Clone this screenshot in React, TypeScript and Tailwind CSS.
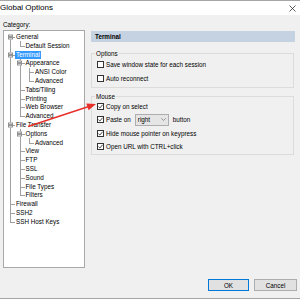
import React from "react";

// tree rows: label, guide columns (| continue, T tee, L corner, F first root, space none), expander box
const rows: { label: string; guides: string; box?: boolean; selected?: boolean }[] = [
  { label: "General", guides: "F", box: true },
  { label: "Default Session", guides: "|L" },
  { label: "Terminal", guides: "T", box: true, selected: true },
  { label: "Appearance", guides: "|T", box: true },
  { label: "ANSI Color", guides: "||T" },
  { label: "Advanced", guides: "||L" },
  { label: "Tabs/Tiling", guides: "|T" },
  { label: "Printing", guides: "|T" },
  { label: "Web Browser", guides: "|T" },
  { label: "Advanced", guides: "|L" },
  { label: "File Transfer", guides: "T", box: true },
  { label: "Options", guides: "|T", box: true },
  { label: "Advanced", guides: "||L" },
  { label: "View", guides: "|T" },
  { label: "FTP", guides: "|T" },
  { label: "SSL", guides: "|T" },
  { label: "Sound", guides: "|T" },
  { label: "File Types", guides: "|T" },
  { label: "Filters", guides: "|L" },
  { label: "Firewall", guides: "T" },
  { label: "SSH2", guides: "T" },
  { label: "SSH Host Keys", guides: "L" },
];

function Guide({ kind, box }: { kind: string; box?: boolean }) {
  const own = kind === "T" || kind === "L" || kind === "F";
  return (
    <span className="relative h-full w-[9.5px] shrink-0">
      {(kind === "|" || kind === "T") && <span className="absolute bottom-0 left-[4.5px] top-0 w-px bg-[#a0a0a0]" />}
      {kind === "L" && <span className="absolute left-[4.5px] top-0 h-1/2 w-px bg-[#a0a0a0]" />}
      {kind === "F" && <span className="absolute bottom-0 left-[4.5px] top-1/2 w-px bg-[#a0a0a0]" />}
      {own && <span className="absolute left-[4.5px] right-0 top-1/2 h-px bg-[#a0a0a0]" />}
      {box && (
        <span className="absolute left-[2px] top-1/2 flex h-[5px] w-[5px] -translate-y-1/2 items-center justify-center border border-[#919191] bg-white">
          <span className="h-px w-[3px] bg-[#333]" />
        </span>
      )}
    </span>
  );
}

function Check({ checked, label }: { checked?: boolean; label: React.ReactNode }) {
  return (
    <div className="flex items-center gap-[2px]">
      <span className="flex h-[7px] w-[7px] shrink-0 items-center justify-center border border-[#333] bg-white">
        {checked && (
          <svg width="5" height="5" viewBox="0 0 5 5">
            <path d="M0.4 2.6 L1.9 4 L4.6 0.7" stroke="#222" strokeWidth="0.8" fill="none" />
          </svg>
        )}
      </span>
      {label}
    </div>
  );
}

export default function App() {
  return (
    <div className="relative h-[300px] w-[300px] overflow-hidden bg-white font-['Liberation_Sans',Arial,sans-serif] text-black">
      {/* title bar */}
      <div className="flex h-[15px] items-center justify-between border-t border-[#a5a5a5] bg-white">
        <span className="text-[8px] leading-none">Global Options</span>
        <svg width="7" height="7" viewBox="0 0 7 7" className="mr-[4px]">
          <path d="M0.5 0.5 L6.5 6.5 M6.5 0.5 L0.5 6.5" stroke="#333" strokeWidth="0.8" />
        </svg>
      </div>

      <div className="flex h-[284px] flex-col border-b border-[#a5a5a5] bg-[#f0f0f0] px-[3px] text-[6.3px] leading-[7px]">
        <div className="pt-[6px]">Category:</div>

        <div className="mt-[2px] flex">
          {/* tree */}
          <div className="h-[238px] w-[82px] shrink-0 border border-[#a8a8a8] bg-white pl-[1.5px] pt-[1.6px]">
            {rows.map((r, i) => (
              <div key={i} className="flex h-[8.8px] items-center">
                {r.guides.split("").map((g, j) => (
                  <Guide key={j} kind={g} box={r.box && j === r.guides.length - 1} />
                ))}
                <span
                  className={
                    r.selected
                      ? "bg-[#3399ff] px-[1px] leading-[8px] whitespace-nowrap text-white"
                      : "px-[1px] leading-[8px] whitespace-nowrap"
                  }
                >
                  {r.label}
                </span>
              </div>
            ))}
          </div>

          {/* settings panel */}
          <div className="ml-[6px] w-[204px]">
            <div className="mt-[1px] flex h-[11px] items-center bg-[#c4d2e1] pl-[4px] font-bold">Terminal</div>

            <fieldset className="mt-[7.5px] mr-[1px] border border-[#dcdcdc] px-[5px] pb-[1.75px]">
              <legend className="-ml-[2px] px-[1px] leading-[7px]">Options</legend>
              <div className="pt-[1.25px]">
                <div className="flex h-[13.5px] items-center">
                  <Check label="Save window state for each session" />
                </div>
                <div className="flex h-[13.5px] items-center">
                  <Check label="Auto reconnect" />
                </div>
              </div>
            </fieldset>

            <fieldset className="mt-[5px] mr-[1px] border border-[#dcdcdc] px-[5px] pb-[1px]">
              <legend className="-ml-[2px] px-[1px] leading-[7px]">Mouse</legend>
              <div className="pt-[0.35px]">
                <div className="flex h-[13.3px] items-center">
                  <Check checked label="Copy on select" />
                </div>
                <div className="flex h-[13.3px] items-center">
                  <Check checked label="Paste on" />
                  <div className="ml-[4px] flex h-[12px] w-[34px] items-center justify-between border border-[#adadad] bg-[#e5e5e5] pl-[2px] pr-[2px]">
                    <span>right</span>
                    <svg width="5" height="3" viewBox="0 0 5 3">
                      <path d="M0.3 0.3 L2.5 2.5 L4.7 0.3" stroke="#777" strokeWidth="0.7" fill="none" />
                    </svg>
                  </div>
                  <span className="ml-[4px]">button</span>
                </div>
                <div className="flex h-[13.3px] items-center">
                  <Check checked label="Hide mouse pointer on keypress" />
                </div>
                <div className="flex h-[13.3px] items-center">
                  <Check checked label="Open URL with CTRL+click" />
                </div>
              </div>
            </fieldset>
          </div>
        </div>

        <div className="mt-[11px] flex justify-end gap-[5px]">
          <button className="flex h-[12px] w-[41px] items-center justify-center border border-[#0078d7] bg-[#e1e1e1]">OK</button>
          <button className="flex h-[12px] w-[43px] items-center justify-center border border-[#adadad] bg-[#e1e1e1]">Cancel</button>
        </div>
      </div>

      {/* red annotation arrow */}
      <svg className="pointer-events-none absolute inset-0" width="300" height="300" viewBox="0 0 300 300">
        <line x1="28" y1="126.5" x2="88" y2="106.7" stroke="#e8302a" strokeWidth="1.6" />
        <polygon points="96,104 88.6,110.2 86.3,103.5" fill="#e8302a" />
      </svg>
    </div>
  );
}
